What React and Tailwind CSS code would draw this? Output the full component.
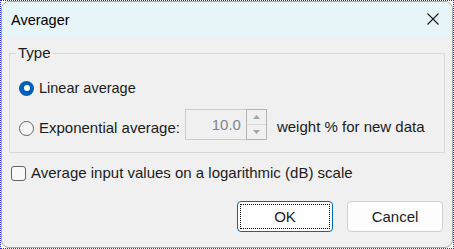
import React from "react";

function Radio({ checked }) {
  if (checked) {
    return (
      <span className="flex h-[15px] w-[15px] shrink-0 items-center justify-center rounded-full bg-[#005fb8]">
        <span className="h-[6px] w-[6px] rounded-full bg-white" />
      </span>
    );
  }
  return <span className="h-[15px] w-[15px] shrink-0 rounded-full border border-[#646464] bg-[#f6f6f6]" />;
}

export default function App() {
  return (
    <div
      className="h-[249px] w-[454px] border border-dotted border-[#2b2bd6] bg-white text-[15px] leading-[20px] text-[#1b1b1b]"
      style={{ fontFamily: '"Liberation Sans", Arial, sans-serif' }}
    >
      <div className="flex h-full flex-col overflow-hidden rounded-[8px] border border-[#a9a9a9] bg-[#f0f0f0]">
        <div className="flex h-[35px] shrink-0 items-center justify-between bg-[#e8f5f8] pl-[9px] pr-[13px]">
          <span className="text-[14.5px] text-black">Averager</span>
          <svg width="12" height="12" viewBox="0 0 12 12" className="mb-[1px]">
            <path d="M0.5 0.5 L11.5 11.5 M11.5 0.5 L0.5 11.5" stroke="#1a1a1a" strokeWidth="1.1" fill="none" />
          </svg>
        </div>
        <div className="flex flex-1 flex-col pl-[7px] pr-[7px] pt-[6px]">
          <fieldset className="border border-[#d9d9d9] pb-[12px] pl-[6px] pr-[8px]">
            <legend className="px-[2px] leading-[20px]">Type</legend>
            <div className="flex flex-col pl-[3px] pt-[15px]">
              <label className="flex h-[20px] items-center gap-[5px]">
                <Radio checked />
                <span className="text-[14.5px]">Linear average</span>
              </label>
              <div className="mt-[11px] flex items-start">
                <label className="mt-[9px] flex h-[20px] items-center gap-[5px]">
                  <Radio />
                  <span>Exponential average:</span>
                </label>
                <div className="ml-[5px] flex h-[31px] w-[82px] border border-[#cccccc] bg-[#f0f0f0]">
                  <div className="flex flex-1 items-start justify-end pr-[5px] pt-[5px] text-[#7d8590]">10.0</div>
                  <div className="-my-px -mr-px flex w-[21px] flex-col border border-[#b4b4b4]">
                    <div className="flex flex-1 items-center justify-center border-b border-[#d9d9d9]">
                      <svg width="7" height="4" viewBox="0 0 7 4"><path d="M0 4 L3.5 0 L7 4 Z" fill="#a6a6a6" /></svg>
                    </div>
                    <div className="flex flex-1 items-center justify-center">
                      <svg width="7" height="4" viewBox="0 0 7 4"><path d="M0 0 L3.5 4 L7 0 Z" fill="#a6a6a6" /></svg>
                    </div>
                  </div>
                </div>
                <span className="ml-[10px] mt-[8px]">weight % for new data</span>
              </div>
            </div>
          </fieldset>
          <label className="ml-[2px] mt-[10px] flex h-[20px] items-center gap-[5px]">
            <span className="h-[15px] w-[15px] shrink-0 rounded-[3px] border border-[#646464] bg-[#f8f8f8]" />
            <span>Average input values on a logarithmic (dB) scale</span>
          </label>
          <div className="mr-[2px] mt-[18px] flex justify-end gap-[14px]">
            <button className="relative h-[31px] w-[96px] rounded-[4px] border border-[#0067c0] bg-white">
              <span className="absolute inset-[2px] border border-dotted border-black" />
              OK
            </button>
            <button className="h-[31px] w-[96px] rounded-[4px] border border-[#d0d0d0] bg-[#fdfdfd]">Cancel</button>
          </div>
        </div>
      </div>
    </div>
  );
}
